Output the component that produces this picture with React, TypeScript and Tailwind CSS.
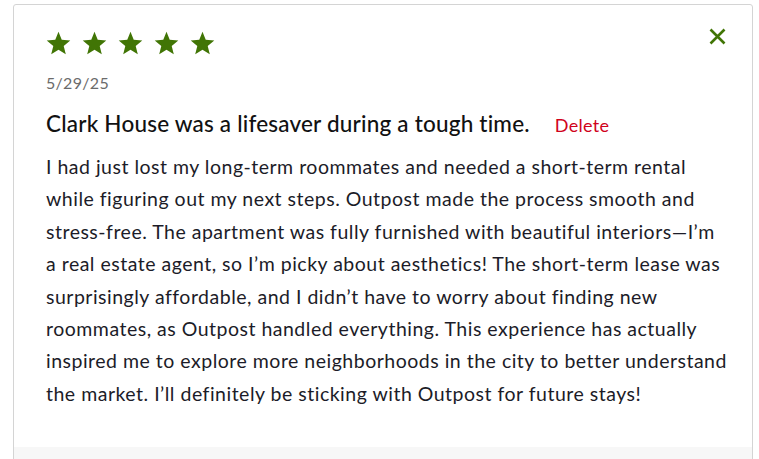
import React from "react";

const Star = () => (
  <svg width="25" height="24" viewBox="0 0 24 23" className="block">
    <path d="M12 0.8l3.1 7.6 8.2 0.6-6.3 5.3 2 8-7-4.4-7 4.4 2-8L0.7 9l8.2-0.6z" fill="#417505" />
  </svg>
);

export default function App() {
  const lines = [
    "I had just lost my long-term roommates and needed a short-term rental",
    "while figuring out my next steps. Outpost made the process smooth and",
    "stress-free. The apartment was fully furnished with beautiful interiors\u2014I\u2019m",
    "a real estate agent, so I\u2019m picky about aesthetics! The short-term lease was",
    "surprisingly affordable, and I didn\u2019t have to worry about finding new",
    "roommates, as Outpost handled everything. This experience has actually",
    "inspired me to explore more neighborhoods in the city to better understand",
    "the market. I\u2019ll definitely be sticking with Outpost for future stays!",
  ];
  return (
    <div className="w-[759px] h-[459px] overflow-hidden bg-white pl-[13px] pr-[6px] pt-[4px]" style={{ fontFamily: "Lato, 'Open Sans', sans-serif" }}>
      <div className="h-[470px] border border-[#d4d4d4] rounded-[3px] flex flex-col">
        <div className="relative px-[32px] pt-[26px] h-[442px]">
          <button className="absolute right-[26px] top-[23px] p-0">
            <svg width="17" height="17" viewBox="0 0 17 17">
              <path d="M1.5 1.5L15.5 15.5M15.5 1.5L1.5 15.5" stroke="#417505" strokeWidth="2.6" strokeLinecap="butt" />
            </svg>
          </button>
          <div className="flex gap-[11px]">
            <Star /><Star /><Star /><Star /><Star />
          </div>
          <div className="mt-[18px] text-[16px] leading-[20px] tracking-[0.3px] text-[#6b6b6b]">5/29/25</div>
          <div className="mt-[18px] flex items-baseline">
            <span className="text-[22.5px] leading-[26px] tracking-[0.2px] font-medium text-[#111]">Clark House was a lifesaver during a tough time.</span>
            <span className="ml-[25px] text-[18px] tracking-[0.3px] text-[#d0021b]">Delete</span>
          </div>
          <p className="mt-[12px] whitespace-nowrap text-[19.5px] leading-[32.4px] tracking-[0.5px] text-[#1c1c28]">
            {lines.map((l, i) => (
              <React.Fragment key={i}>
                {l}
                {i < lines.length - 1 && <br />}
              </React.Fragment>
            ))}
          </p>
        </div>
        <div className="flex-1 bg-[#f7f7f7]" />
      </div>
    </div>
  );
}
